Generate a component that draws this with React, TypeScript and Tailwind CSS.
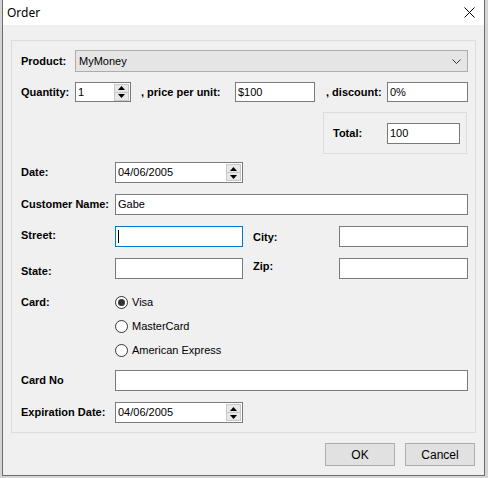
// Order dialog (WinForms-style) recreated with Tailwind.

const LABEL = "font-bold text-[11px] text-black";
const BOX = "h-[21px] border border-[#7a7a7a] bg-white px-[2px] text-[11px] text-black flex items-center";

function Spin() {
  return (
    <div className="flex h-[17px] w-[15px] flex-col border border-[#c8c8c8] bg-[#e8e8e8]">
      <div className="flex flex-1 items-center justify-center border-b border-[#c8c8c8]">
        <svg width="7" height="4" viewBox="0 0 7 4">
          <path d="M0 4 L3.5 0 L7 4 Z" fill="#000" />
        </svg>
      </div>
      <div className="flex flex-1 items-center justify-center">
        <svg width="7" height="4" viewBox="0 0 7 4">
          <path d="M0 0 L3.5 4 L7 0 Z" fill="#000" />
        </svg>
      </div>
    </div>
  );
}

function SpinBox({ value, width }: { value: string; width: string }) {
  return (
    <div className={`${BOX} ${width} justify-between pr-[1px]`}>
      <span>{value}</span>
      <Spin />
    </div>
  );
}

function Radio({ label, checked }: { label: string; checked?: boolean }) {
  return (
    <div className="flex h-[16px] items-center gap-[4px]">
      <div className="flex h-[13px] w-[13px] items-center justify-center rounded-full border border-[#333] bg-white">
        {checked && <div className="h-[7px] w-[7px] rounded-full bg-[#333]" />}
      </div>
      <span className="text-[11px] text-black">{label}</span>
    </div>
  );
}

export default function App() {
  return (
    <div
      className="h-[478px] w-[488px] bg-[#d4d4d4] pl-[2px]"
      style={{ fontFamily: '"Liberation Sans", Arial, sans-serif' }}
    >
      <div className="flex h-[476px] w-[483px] flex-col border-x border-b border-[#6e6e6e] bg-[#f0f0f0]">
        {/* title bar */}
        <div className="flex h-[25px] items-center justify-between bg-white pl-[4px] pr-[9px]">
          <span className="text-[12px] text-black" style={{ fontFamily: '"Noto Sans", "Open Sans", sans-serif' }}>
            Order
          </span>
          <svg width="11" height="11" viewBox="0 0 11 11">
            <path d="M0.5 0.5 L10.5 10.5 M10.5 0.5 L0.5 10.5" stroke="#000" strokeWidth="1" />
          </svg>
        </div>

        {/* group box */}
        <div className="ml-[8px] mt-[15px] h-[393px] w-[465px] border border-[#dcdcdc] pl-[9px] pr-[7px]">
          <div className="mt-[9px] flex h-[22px] items-center">
            <span className={`${LABEL} w-[54px]`}>Product:</span>
            <div className="flex h-[22px] flex-1 items-center justify-between border border-[#adadad] bg-[#e5e5e5] pl-[3px] pr-[6px] text-[11px] text-black">
              <span>MyMoney</span>
              <svg width="9" height="5" viewBox="0 0 9 5">
                <path d="M0.5 0.5 L4.5 4.5 L8.5 0.5" stroke="#333" strokeWidth="1" fill="none" />
              </svg>
            </div>
          </div>

          <div className="mt-[10px] flex h-[20px] items-center">
            <span className={`${LABEL} w-[54px]`}>Quantity:</span>
            <SpinBox value="1" width="w-[56px] !h-[20px]" />
            <span className={`${LABEL} ml-[10px] w-[94px]`}>, price per unit:</span>
            <div className={`${BOX} !h-[20px] w-[80px]`}>$100</div>
            <span className={`${LABEL} ml-[11px] w-[61px]`}>, discount:</span>
            <div className={`${BOX} !h-[20px] w-[81px]`}>0%</div>
          </div>

          <div className="mt-[10px] flex justify-end pr-[1px]">
            <div className="flex h-[42px] w-[144px] items-center border border-[#dcdcdc] pl-[9px]">
              <span className={`${LABEL} w-[54px]`}>Total:</span>
              <div className={`${BOX} w-[73px]`}>100</div>
            </div>
          </div>

          <div className="mt-[8px] flex h-[21px] items-center">
            <span className={`${LABEL} w-[94px]`}>Date:</span>
            <SpinBox value="04/06/2005" width="w-[128px]" />
          </div>

          <div className="mt-[11px] flex h-[21px] items-center">
            <span className={`${LABEL} w-[94px]`}>Customer Name:</span>
            <div className={`${BOX} flex-1`}>Gabe</div>
          </div>

          <div className="mt-[11px] flex h-[21px] items-center">
            <span className={`${LABEL} w-[94px] pb-[2px]`}>Street:</span>
            <div className="flex h-[21px] w-[128px] items-center border border-[#0078d7] bg-white pl-[2px]">
              <div className="h-[13px] w-[1px] bg-black" />
            </div>
            <span className={`${LABEL} ml-[10px] w-[86px] pt-[2px]`}>City:</span>
            <div className={`${BOX} flex-1`} />
          </div>

          <div className="mt-[11px] flex h-[21px] items-center">
            <span className={`${LABEL} w-[94px] pt-[5px]`}>State:</span>
            <div className={`${BOX} w-[128px]`} />
            <span className={`${LABEL} ml-[10px] w-[86px] pb-[4px]`}>Zip:</span>
            <div className={`${BOX} flex-1`} />
          </div>

          <div className="mt-[15px] flex">
            <span className={`${LABEL} w-[94px] leading-[16px]`}>Card:</span>
            <div className="flex flex-col gap-[8px]">
              <Radio label="Visa" checked />
              <Radio label="MasterCard" />
              <Radio label="American Express" />
            </div>
          </div>

          <div className="mt-[12px] flex h-[21px] items-center">
            <span className={`${LABEL} w-[94px]`}>Card No</span>
            <div className={`${BOX} flex-1`} />
          </div>

          <div className="mt-[11px] flex h-[21px] items-center">
            <span className={`${LABEL} w-[94px]`}>Expiration Date:</span>
            <SpinBox value="04/06/2005" width="w-[128px]" />
          </div>
        </div>

        {/* buttons */}
        <div className="mt-[10px] flex justify-end gap-[10px] pr-[9px]">
          <button className="h-[23px] w-[70px] border border-[#adadad] bg-[#e1e1e1] text-[12px] text-black">OK</button>
          <button className="h-[23px] w-[70px] border border-[#adadad] bg-[#e1e1e1] text-[12px] text-black">Cancel</button>
        </div>
      </div>
    </div>
  );
}
